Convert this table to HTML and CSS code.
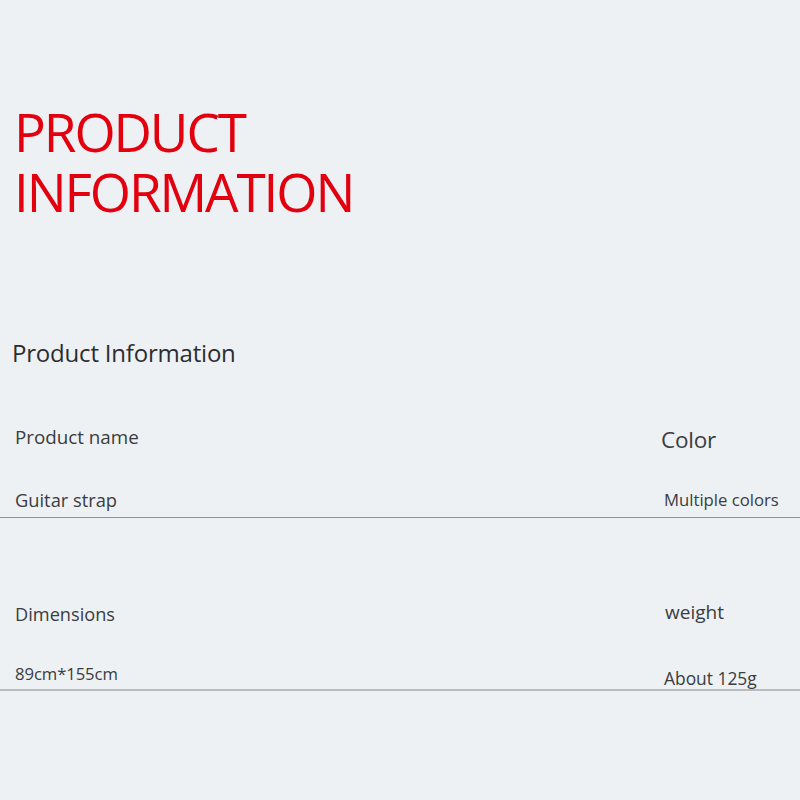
FILE: index.html
```html
<!DOCTYPE html>
<html>
<head>
<meta charset="utf-8">
<link rel="stylesheet" href="styles.css">
</head>
<body>
<div class="page">
  <h1 class="title"><span class="title-line">PRODUCT</span><span class="title-line">INFORMATION</span></h1>
  <h2 class="subtitle">Product Information</h2>
  <div class="spec spec-first">
    <div class="col col-left">
      <div class="label label-name lift-3">Product name</div>
      <div class="value gap-39">Guitar strap</div>
    </div>
    <div class="col col-right">
      <div class="label label-color">Color</div>
      <div class="value value-multi">Multiple colors</div>
    </div>
  </div>
  <div class="spec spec-second">
    <div class="col col-left">
      <div class="label">Dimensions</div>
      <div class="value value-dim">89cm*155cm</div>
    </div>
    <div class="col col-right">
      <div class="label label-weight lift-2">weight</div>
      <div class="value value-weight">About 125g</div>
    </div>
  </div>
</div>
</body>
</html>
```

FILE: styles.css
```css
html, body {
  margin: 0;
  padding: 0;
  background: #edf1f4;
}
.page {
  width: 800px;
  height: 800px;
  font-family: "Open Sans", "Noto Sans", sans-serif;
  color: #2e3033;
  padding-top: 102px;
  box-sizing: border-box;
}
.title {
  margin: 0 0 0 14px;
  font-weight: 400;
  font-size: 53px;
  line-height: 60px;
  color: #e2000f;
  letter-spacing: -2.1px;
  display: flex;
  flex-direction: column;
}
.title-line {
  display: block;
  height: 60px;
}
.subtitle {
  margin: 116px 0 0 12px;
  font-weight: 400;
  font-size: 24px;
  line-height: 30px;
  color: #2b2d30;
  letter-spacing: -0.2px;
}
.spec {
  display: grid;
  grid-template-columns: 661px 1fr;
}
.spec-first {
  margin-top: 60px;
  border-bottom: 1px solid #8f9396;
  height: 89px;
}
.spec-second {
  margin-top: 84px;
  border-bottom: 2px solid #b9bdc1;
  height: 87px;
}
.col {
  display: flex;
  flex-direction: column;
}
.col-left {
  padding-left: 15px;
}
.label {
  font-size: 18.2px;
  line-height: 24px;
  color: #3a3c3f;
}
.value {
  margin-top: 36px;
  font-size: 18.3px;
  line-height: 24px;
  color: #3a3c3f;
}
.label-name {
  font-size: 18.8px;
}
.lift-3 {
  margin-top: -3px;
}
.lift-2 {
  margin-top: -2px;
}
.gap-39 {
  margin-top: 39px;
}
.label-color {
  font-size: 22.5px;
  letter-spacing: -0.2px;
}
.value-multi {
  padding-left: 3px;
  font-size: 16.7px;
}
.value-dim {
  font-size: 16.7px;
  letter-spacing: -0.1px;
}
.label-weight {
  padding-left: 4px;
  font-size: 19px;
}
.value-weight {
  margin-top: 42px;
  padding-left: 3px;
  font-size: 17.4px;
}
```
